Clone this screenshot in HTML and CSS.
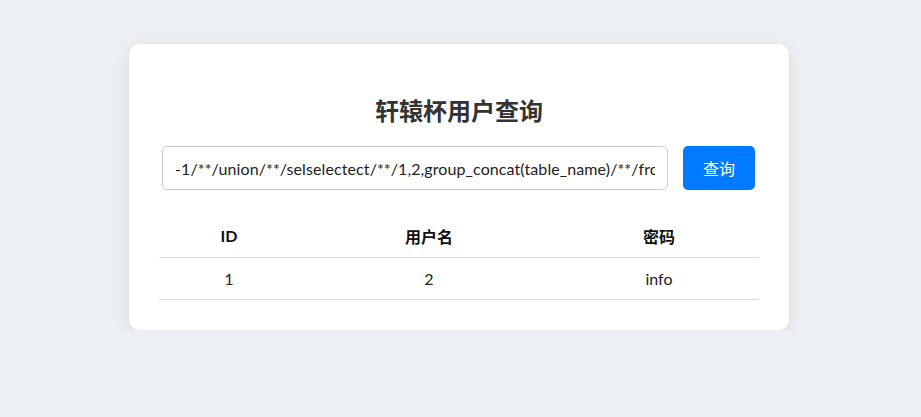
FILE: index.html
```html
<!DOCTYPE html>
<html lang="zh">
<head>
<meta charset="utf-8">
<title>轩辕杯用户查询</title>
<link rel="stylesheet" href="styles.css">
</head>
<body>
<div class="card">
  <h2 class="title">轩辕杯用户查询</h2>
  <form class="search">
    <input class="search-input" type="text" value="-1/**/union/**/selselectect/**/1,2,group_concat(table_name)/**/from/**/information_schema.tables">
    <button class="search-btn" type="button">查询</button>
  </form>
  <table class="results">
    <thead>
      <tr><th class="c1">ID</th><th class="c2">用户名</th><th class="c3">密码</th></tr>
    </thead>
    <tbody>
      <tr><td>1</td><td>2</td><td>info</td></tr>
    </tbody>
  </table>
</div>
</body>
</html>
```
FILE: styles.css
```css
* { box-sizing: border-box; }
html, body { margin: 0; padding: 0; }
body {
  background: #eceff3;
  font-family: "Lato", "Noto Sans CJK SC", sans-serif;
  color: #222;
  padding: 44px 3px 0 0;
}
.card {
  width: 660px;
  margin: 0 auto;
  background: #fff;
  border-radius: 10px;
  box-shadow: 0 4px 14px rgba(0,0,0,0.1);
  padding: 30px;
}
.title {
  margin: 20px 0 20px;
  height: 32px;
  line-height: 32px;
  font-size: 24px;
  font-weight: 700;
  text-align: center;
  color: #333;
  font-family: "Noto Sans CJK SC", sans-serif;
}
.search {
  display: flex;
  gap: 15px;
  padding: 0 4px 0 3px;
}
.search-input {
  width: 506px;
  height: 44px;
  border: 1px solid #ccc;
  border-radius: 5px;
  padding: 0 12px;
  font-size: 16px;
  letter-spacing: 0.1px;
  font-family: "Lato", "Noto Sans CJK SC", sans-serif;
  color: #222;
  outline: none;
}
.search-btn {
  width: 72px;
  height: 44px;
  border: none;
  border-radius: 5px;
  background: #007bff;
  color: #fff;
  font-size: 16px;
  font-family: "Noto Sans CJK SC", sans-serif;
}
.results {
  width: 600px;
  margin-top: 25px;
  border-collapse: collapse;
  font-size: 16px;
}
.results th, .results td {
  height: 42px;
  text-align: center;
  border-bottom: 1px solid #ddd;
  padding: 0;
}
.results th {
  font-weight: 700;
  color: #111;
  font-family: "Lato", "Noto Sans CJK SC", sans-serif;
}
.c1 { width: 140px; }
.c2 { width: 260px; }
.c3 { width: 200px; }
```
